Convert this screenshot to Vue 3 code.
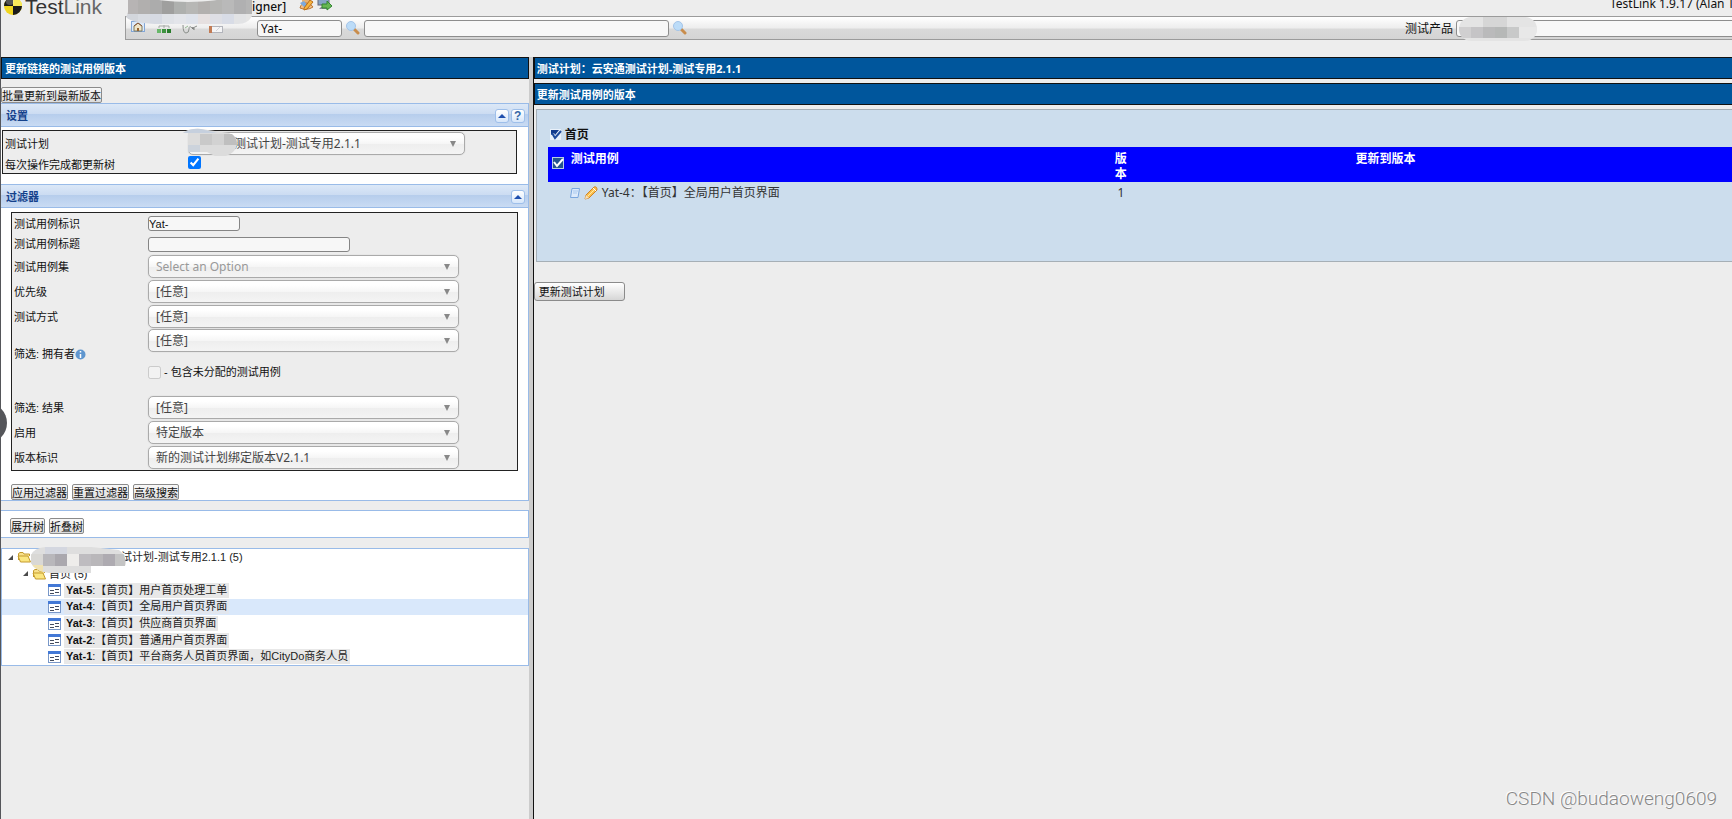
<script setup>
import { ref } from 'vue'

const headerQuery = ref('Yat-')
const headerText = ref('')
const refreshTree = ref(true)
const includeUnassigned = ref(false)
const caseId = ref('Yat-')
const caseTitle = ref('')

const anyFilters = [
  { id: 'suite', label: '测试用例集', value: 'Select an Option', placeholder: true },
  { id: 'priority', label: '优先级', value: '[任意]' },
  { id: 'exec', label: '测试方式', value: '[任意]' }
]
const resultFilters = [
  { id: 'result', label: '筛选: 结果', value: '[任意]' },
  { id: 'enabled', label: '启用', value: '特定版本' },
  { id: 'build', label: '版本标识', value: '新的测试计划绑定版本V2.1.1' }
]
const cases = [
  { id: 'Yat-5', title: '【首页】用户首页处理工单' },
  { id: 'Yat-4', title: '【首页】全局用户首页界面', active: true },
  { id: 'Yat-3', title: '【首页】供应商首页界面' },
  { id: 'Yat-2', title: '【首页】普通用户首页界面' },
  { id: 'Yat-1', title: '【首页】平台商务人员首页界面，如CityDo商务人员' }
]
const roleTiles = ['#b7b4b4', '#b1afae', '#acacac', '#9f9f9e', '#aeb0ae', '#b7b7b5', '#b3b0ae', '#b5b5b3', '#b9b9b9', '#b0b0b1', '#b5b5b5']
const roleTilesLow = ['#d3d6dc', '#d9dce2', '#d6dae3', '#dfe2e7', '#e3e5ea', '#dfe3eb', '#e6e0e0', '#dedfe5', '#d8dce6', '#e2e3e5', '#e5e5e5']
const productTiles = ['#d0cfd0', '#c5c4c6', '#bababb', '#b6b8b7', '#c8c9c9', '#e8e8e8', '#e8e8e8']
const treeTiles = ['#d9d8d5', '#b8b7bb', '#aaa8ae', '#eeedeb', '#bebcc0', '#b9b7ba', '#aeabb1', '#c4c4c4']
</script>

<template>
  <div class="page">
    <header class="top">
      <div class="logo">
        <svg width="23" height="18" viewBox="0 0 23 18" aria-hidden="true">
          <circle cx="12" cy="6" r="9" fill="#f0d51f" />
          <path d="M12 6V-3A9 9 0 0 0 3 6Z M12 6V15A9 9 0 0 0 21 6Z" fill="#1b1b1b" />
          <path d="M12 6V-3A9 9 0 0 1 21 6Z" fill="#f8e95a" />
          <ellipse cx="9" cy="2" rx="4" ry="3" fill="#fff" opacity=".25" />
        </svg>
        <span>Test<i>Link</i></span>
      </div>
      <div class="top-main">
        <div class="user-line">
          <b>igner]</b>
          <svg width="16" height="13" viewBox="0 0 16 13" aria-hidden="true">
            <circle cx="7" cy="1" r="4" fill="#e6b172" />
            <path d="M1 8Q2 3 7 3T14 7Q8 11 1 8Z" fill="#f1be87" stroke="#bd7632" />
            <path d="M1 3 5 1 10 7 7 9Z" fill="#7ca9dc" />
            <path d="M5 8 11 0 14 2 8 9 5 10Z" fill="#f6b33d" stroke="#b86c19" />
          </svg>
          <svg width="16" height="13" viewBox="0 0 16 13" aria-hidden="true">
            <rect x="1" y="-3" width="11" height="8" fill="#86a4c6" stroke="#667" />
            <path d="M4 7H10V9H2Z" fill="#889" />
            <path d="M5 4H10V1L15 6 10 10V8H5Z" fill="#66b753" stroke="#328632" />
          </svg>
          <span class="version">TestLink 1.9.17 (Alan Turing)</span>
        </div>
        <div class="toolbar">
          <nav class="tools">
            <a href="#home" aria-label="Home">
              <svg width="16" height="16" viewBox="0 0 16 16">
                <rect x="1.500" y="1.500" width="13" height="10" fill="#dce9f8" stroke="#82a6d6" />
                <path d="M4 6V11H12V6L8 3Z" fill="#eee4c8" stroke="#7f7a60" />
                <path d="M4 6 8 3 12 6" fill="none" stroke="#8b5634" />
                <path d="M7 8H9V11H7Z" fill="#98642f" />
              </svg>
            </a>
            <a href="#spec" aria-label="Specification">
              <svg width="16" height="16" viewBox="0 0 16 16">
                <path d="M3 8V6H13V8M8 5V8" fill="none" stroke="#a5aaa5" />
                <path d="M1 9H5V13H1Z" fill="#67b768" /><path d="M6 9H10V13H6Z" fill="#3e9340" /><path d="M11 9H15V13H11Z" fill="#287c2b" />
              </svg>
            </a>
            <a href="#run" aria-label="Execute">
              <svg width="16" height="16" viewBox="0 0 16 16">
                <path d="M1 5Q1 13 4 13T7 9 10 8 12 9 15 6" fill="none" stroke="#8b908b" />
                <path d="M3 8 6 6" stroke="#95bb93" /><circle cx="11" cy="8" r="1" fill="#777" />
              </svg>
            </a>
            <a href="#report" aria-label="Reports">
              <svg width="16" height="16" viewBox="0 0 16 16">
                <rect x="2.500" y="6.500" width="12" height="6" fill="#f4f4f5" stroke="#b2b4bb" />
                <path d="M1 6H4V13H1Z" fill="#c27b54" /><path d="M8 11 12 7" stroke="#d4d4d8" />
              </svg>
            </a>
          </nav>
          <input v-model="headerQuery" class="search-id" type="text" aria-label="用例标识">
          <button class="glass" aria-label="查找">
            <svg width="14" height="14" viewBox="0 0 14 14"><path d="M8 8 12 12" stroke="#c98d4c" stroke-width="3" stroke-linecap="round" /><circle cx="5" cy="5" r="4.500" fill="#bcdcf8" stroke="#a4c4e8" /></svg>
          </button>
          <input v-model="headerText" class="search-text" type="text" aria-label="全文搜索">
          <button class="glass" aria-label="搜索">
            <svg width="14" height="14" viewBox="0 0 14 14"><path d="M8 8 12 12" stroke="#c98d4c" stroke-width="3" stroke-linecap="round" /><circle cx="5" cy="5" r="4.500" fill="#bcdcf8" stroke="#a4c4e8" /></svg>
          </button>
          <label class="product-label" for="product">测试产品</label>
          <div class="product-wrap">
            <select id="product" class="product"><option></option></select>
            <svg class="mask product-mask" width="78" height="25" viewBox="0 0 78 25" aria-hidden="true">
              <clipPath id="cp1"><rect width="78" height="24" rx="12" /></clipPath>
              <g clip-path="url(#cp1)">
                <rect width="78" height="25" fill="#e4e4e4" />
                <rect x="24" width="24" height="10" fill="#d6d6d6" />
                <rect v-for="(c, i) in productTiles" :key="i" :x="i * 12" y="10" width="12" height="11" :fill="c" />
              </g>
            </svg>
          </div>
        </div>
        <svg class="mask role-mask" width="126" height="25" viewBox="0 0 126 25" aria-hidden="true">
          <clipPath id="cp2"><path d="M2 0H126V16Q122 24 112 24H36Q6 24 0 17Q2 14 2 12Z" /></clipPath>
          <g clip-path="url(#cp2)">
            <rect v-for="(c, i) in roleTiles" :key="'a' + i" :x="i * 12" y="0" width="12" height="14" :fill="c" />
            <rect v-for="(c, i) in roleTilesLow" :key="'b' + i" :x="i * 12" y="14" width="12" height="11" :fill="c" />
            <ellipse cx="62" cy="-3" rx="36" ry="5" fill="#ededed" />
          </g>
        </svg>
      </div>
    </header>

    <div class="frames">
      <aside class="left">
        <h1 class="title">更新链接的测试用例版本</h1>
        <button class="btn bulk">批量更新到最新版本</button>

        <section>
          <div class="panel-head">
            <h2>设置</h2>
            <button class="tool" aria-label="收起设置"><svg width="8" height="4" viewBox="0 0 8 4"><path d="M0 4 4 0 8 4Z" fill="#1f4fae" /></svg></button>
            <button class="tool" aria-label="帮助">?</button>
          </div>
          <div class="panel-body settings-body">
            <div class="box settings">
              <div class="row plan-row">
                <label for="plan">测试计划</label>
                <span class="drop"><select id="plan"><option>测试计划-测试专用2.1.1</option></select></span>
                <svg class="mask plan-mask" width="56" height="29" viewBox="0 0 56 29" aria-hidden="true">
                  <path d="M0 5Q6 0 18 1L46 5Q56 9 54 17T43 28H32L24 24H5V5Z" fill="#dcdcdc" />
                  <path d="M0 5Q8 0 18 1L34 5Z" fill="#c6d0de" />
                  <path d="M17 6H29V17H17Z" fill="#c9c9c9" /><path d="M29 6H41V17H29Z" fill="#d2d2d2" />
                  <path d="M41 6H49Q54 10 54 17H41Z" fill="#bfbfbf" /><path d="M5 17H17V24H5Z" fill="#ccd3dc" />
                </svg>
              </div>
              <div class="row refresh-row">
                <label for="refresh">每次操作完成都更新树</label>
                <input id="refresh" v-model="refreshTree" type="checkbox">
              </div>
            </div>
          </div>
        </section>

        <section>
          <div class="panel-head">
            <h2>过滤器</h2>
            <button class="tool" aria-label="收起过滤器"><svg width="8" height="4" viewBox="0 0 8 4"><path d="M0 4 4 0 8 4Z" fill="#1f4fae" /></svg></button>
          </div>
          <div class="panel-body filter-body">
            <div class="box filters">
              <div class="row id-row"><label for="caseid">测试用例标识</label><input id="caseid" v-model="caseId" class="short" type="text"></div>
              <div class="row title-row"><label for="casetitle">测试用例标题</label><input id="casetitle" v-model="caseTitle" class="medium" type="text"></div>
              <div v-for="f in anyFilters" :key="f.id" class="row">
                <label :for="f.id">{{ f.label }}</label>
                <span class="drop"><select :id="f.id" :class="{ muted: f.placeholder }"><option>{{ f.value }}</option></select></span>
              </div>
              <div class="row owner">
                <label for="owner">筛选: 拥有者<svg width="11" height="11" viewBox="0 0 11 11" aria-hidden="true"><circle cx="5.500" cy="5.500" r="5" fill="#5f96cf" /><path d="M5.500 2V3.500M5.500 5V9" stroke="#fff" stroke-width="1.500" /></svg></label>
                <div class="owner-controls">
                  <span class="drop"><select id="owner"><option>[任意]</option></select></span>
                  <div class="unassigned"><input id="unassigned" v-model="includeUnassigned" type="checkbox" disabled><label for="unassigned">- 包含未分配的测试用例</label></div>
                </div>
              </div>
              <div v-for="f in resultFilters" :key="f.id" class="row">
                <label :for="f.id">{{ f.label }}</label>
                <span class="drop"><select :id="f.id"><option>{{ f.value }}</option></select></span>
              </div>
            </div>
            <div class="actions">
              <button class="btn">应用过滤器</button>
              <button class="btn">重置过滤器</button>
              <button class="btn">高级搜索</button>
            </div>
          </div>
        </section>

        <div class="tree-actions">
          <button class="btn">展开树</button>
          <button class="btn">折叠树</button>
        </div>

        <div class="tree">
          <div v-for="n in 2" :key="n" class="node" :class="n === 1 ? 'root' : 'suite'">
            <svg width="7" height="7" viewBox="0 0 7 7" aria-hidden="true"><path d="M6 1V6H1Z" fill="#4a4a4a" /></svg>
            <svg class="folder" width="14" height="12" viewBox="0 0 14 12" aria-hidden="true">
              <path d="M1.500 9V2.500L3 1.500H6L7 3H12.500V5" fill="#f8e08a" stroke="#c49a2c" />
              <path d="M1 5H11L13.500 11H3.500Z" fill="#fbe680" stroke="#c49a2c" />
            </svg>
            <span>{{ n === 1 ? '试计划-测试专用2.1.1 (5)' : '首页 (5)' }}</span>
          </div>
          <div v-for="c in cases" :key="c.id" class="node leaf" :class="{ active: c.active }">
            <svg width="13" height="12" viewBox="0 0 13 12" aria-hidden="true">
              <rect x=".5" y=".5" width="12" height="11" fill="#fff" stroke="#7897c8" />
              <path d="M0 0H13V3H0Z" fill="#4379d6" />
              <path d="M2 6.500H6M7 5.500H11M2 9.500H6M7 8.500H11" stroke="#444d60" />
            </svg>
            <a href="#case"><b>{{ c.id }}</b>:{{ c.title }}</a>
          </div>
          <svg class="mask tree-mask" width="95" height="26" viewBox="0 0 95 26" aria-hidden="true">
            <clipPath id="cp3"><path d="M0 8Q3 1 14 0H60L88 3Q96 9 94 19H60V26H18Q4 24 0 16Z" /></clipPath>
            <g clip-path="url(#cp3)">
              <rect width="95" height="26" fill="#dedede" />
              <rect x="14" width="22" height="7" fill="#d4d7e0" />
              <rect v-for="(c, i) in treeTiles" :key="i" :x="i * 12" y="7" width="12" height="12" :fill="c" />
              <rect y="18" width="12" height="8" fill="#f0e2b1" />
            </g>
          </svg>
        </div>
      </aside>

      <main class="right">
        <h1 class="title">测试计划：云安通测试计划-测试专用2.1.1</h1>
        <h2 class="title second">更新测试用例的版本</h2>
        <div class="workarea">
          <h3>
            <svg width="12" height="12" viewBox="0 0 12 12" aria-hidden="true"><rect width="11" height="11" fill="#e9f1fa" /><path d="M1 1H9L5 6 4 4 1 6Z" fill="#123a8c" /><path d="M2 4 5 9 11 2" fill="none" stroke="#1f4b9d" stroke-width="2" /></svg>
            首页
          </h3>
          <table>
            <colgroup><col class="c-check"><col><col class="c-ver"><col class="c-upd"><col class="c-rest"></colgroup>
            <thead>
              <tr>
                <th class="check"><svg width="12" height="12" viewBox="0 0 12 12" role="img" aria-label="全选"><rect x=".5" y=".5" width="11" height="11" fill="#24548f" stroke="#b8cce4" /><path d="M2 5 5 9 11 2" fill="none" stroke="#fff" stroke-width="2" /></svg></th>
                <th class="name">测试用例</th><th class="ver">版本</th><th>更新到版本</th><th></th>
              </tr>
            </thead>
            <tbody>
              <tr>
                <td></td>
                <td class="case">
                  <svg width="10" height="10" viewBox="0 0 10 10" aria-hidden="true"><path d="M2 .5H9.500L8 9.500H.5Z" fill="#dceafb" stroke="#7ba7dd" /><path d="M3 3H8M3 5H7" stroke="#a9c9ee" /></svg>
                  <svg class="pencil" width="14" height="14" viewBox="0 0 14 14" aria-hidden="true"><path d="M1 13 2 9 10 1Q13 0 13 4L5 12Z" fill="#fbbf4b" stroke="#cc832a" /><path d="M1 13 2 9 5 12Z" fill="#f5e1c0" /><path d="M9 2 12 5" stroke="#fff" /><path d="M4 10 10 4" stroke="#ffe9a6" /></svg>
                  <span>Yat-4：【首页】全局用户首页界面</span>
                </td>
                <td class="num">1</td><td></td><td></td>
              </tr>
            </tbody>
          </table>
        </div>
        <button class="update">更新测试计划</button>
      </main>
    </div>

    <div class="side-handle"></div>
    <div class="watermark">CSDN @budaoweng0609</div>
  </div>
</template>

<style>
html, body { margin: 0; background: #ededed; }
</style>

<style scoped>
* { box-sizing: border-box; }
.page {
  position: relative;
  min-height: 100vh;
  display: flex;
  flex-direction: column;
  overflow: hidden;
  background: #ededed;
  border-left: 1px solid #55565a;
  color: #111;
  font: 11px/16px "Liberation Sans", "Noto Sans CJK SC", sans-serif;
}
svg { display: block; flex: none; overflow: hidden; }
h1, h2, h3 { margin: 0; font-size: 11px; }
button, input, select { font: inherit; color: inherit; margin: 0; }
a { color: inherit; text-decoration: none; }
.mask { position: absolute; z-index: 2; pointer-events: none; }

.top { display: flex; height: 57px; flex: none; }
.logo { display: flex; width: 124px; flex: none; gap: 1px; color: #333; font-size: 21px; line-height: 14px; }
.logo i { font-style: normal; color: #666; }
.top-main { position: relative; flex: 1; min-width: 0; }
.user-line { display: flex; height: 16px; padding-left: 127px; gap: 2px; font: 12px/14px "Noto Sans", "Noto Sans CJK SC", sans-serif; }
.user-line b { width: 45px; font-weight: 500; }
.version { margin-left: auto; width: 122px; white-space: nowrap; line-height: 7px; }
.toolbar {
  display: flex;
  align-items: center;
  height: 24px;
  border: 1px solid #9b9b9b;
  border-right: 0;
  background: linear-gradient(#fff, #ededed 50%, #d9d9d9 55%, #d4d4d4);
  font: 12px/16px "Noto Sans", "Noto Sans CJK SC", sans-serif;
}
.tools { display: flex; gap: 10px; width: 131px; padding-left: 4px; flex: none; }
.toolbar input, .product { height: 17px; padding: 0 3px; border: 1px solid #8d8d8d; border-radius: 3px; background: #f7f7f7; }
.search-id { width: 85px; }
.search-text { width: 305px; }
.glass { width: 22px; height: 16px; padding: 0 4px; border: 0; background: none; }
.product-label { margin-left: auto; margin-right: 3px; padding-top: 2px; white-space: nowrap; }
.product-wrap { position: relative; width: 276px; height: 17px; flex: none; }
.product { display: block; width: 300px; appearance: none; }
.product-mask { left: 3px; top: -3px; }
.role-mask { left: 1px; top: 0; }

.frames { display: flex; flex: 1; }
.left { width: 30.7vw; flex: none; border-right: 4px solid #ccc; }
.title {
  height: 22px;
  padding-left: 3px;
  border: 1px solid #111;
  background: #00569c;
  color: #fff;
  font: bold 11px/22px "Noto Sans", "Noto Sans CJK SC", sans-serif;
}
.btn {
  height: 16px;
  padding: 1px 0 0;
  border: 1px solid #8b8b8b;
  border-radius: 2px;
  background: linear-gradient(#f8f8f8, #dcdcdc);
  line-height: 14px;
  white-space: nowrap;
}
.bulk { display: block; margin-top: 8px; }
.panel-head {
  display: flex;
  align-items: center;
  gap: 2px;
  height: 24px;
  padding: 1px 3px 0 5px;
  border: 1px solid #99bbe8;
  border-left: 0;
  background: linear-gradient(#dce8f7, #ccdcf2 44%, #b6cdec 46%, #c9dbf3);
}
.panel-head h2 { flex: 1; color: #15428b; }
.tool {
  display: flex;
  align-items: center;
  justify-content: center;
  width: 14px;
  height: 14px;
  padding: 0;
  border: 1px solid #9ebfea;
  border-radius: 3px;
  background: linear-gradient(#fff, #d6e6fa);
  color: #3767a8;
  font-weight: bold;
  font-size: 12px;
  line-height: 12px;
}
.panel-body { background: #fff; border-right: 1px solid #99bbe8; }
.settings-body { padding: 3px 11px 10px 1px; }
.filter-body { padding: 4px 10px 0; border-bottom: 1px solid #99bbe8; }
.box { border: 1px solid #222; background: #ededed; }
.row { display: flex; align-items: center; height: 25px; padding-left: 2px; }
.row > label { display: flex; align-items: center; flex: none; white-space: nowrap; }
.settings .row > label { width: 183px; }
.filters .row > label { width: 134px; }
.plan-row { position: relative; }
.settings .drop { width: 277px; }
.settings .drop select { padding-left: 45px; }
.plan-mask { left: 180px; top: -3px; }
.row.refresh-row { height: 17px; }
.row.id-row { height: 21px; }
.row.title-row { height: 20px; }
input[type="checkbox"] { width: 13px; height: 13px; flex: none; }
.refresh-row input { align-self: flex-start; }
.row input[type="text"] { height: 15px; padding: 0; border: 1px solid #858585; border-radius: 3px; background: #f7f7f7; line-height: 13px; }
.short { width: 92px; }
.medium { width: 202px; }
.drop { position: relative; display: block; width: 311px; height: 23px; flex: none; }
.drop select {
  display: block;
  width: 100%;
  height: 23px;
  padding: 0 24px 0 7px;
  appearance: none;
  border: 1px solid #aaa;
  border-radius: 5px;
  background: linear-gradient(#fff 20%, #f6f6f6 50%, #eee 52%, #f4f4f4);
  box-shadow: 0 0 1px #bbb;
  color: #444;
  font: 12px/20px "Noto Sans", "Noto Sans CJK SC", sans-serif;
}
.drop select.muted { color: #999; }
.drop::after {
  content: "";
  position: absolute;
  right: 9px;
  top: 9px;
  border: 3px solid transparent;
  border-top: 6px solid #888;
  border-bottom: 0;
  pointer-events: none;
}
.row.owner { height: 66px; padding-bottom: 16px; }
.owner-controls { height: 50px; }
.unassigned { display: flex; align-items: center; gap: 3px; padding-top: 12px; white-space: nowrap; }
.actions { display: flex; gap: 4px; padding-top: 13px; }
.tree-actions {
  display: flex;
  gap: 4px;
  height: 28px;
  margin-top: 9px;
  padding: 7px 9px 0;
  border: 1px solid #99bbe8;
  border-left: 0;
  background: #fff;
}
.tree {
  position: relative;
  display: grid;
  grid-auto-rows: 1fr;
  min-height: 118px;
  margin-top: 10px;
  border: 1px solid #99bbe8;
  background: #fff;
}
.node { display: flex; align-items: center; white-space: nowrap; color: #222; }
.root { padding-left: 5px; }
.suite { padding-left: 20px; }
.folder { margin-left: 3px; }
.node span { margin-left: 3px; }
.root span { margin-left: 90px; }
.leaf { padding-left: 46px; }
.leaf a { margin-left: 3px; padding: 0 2px; background: #e8e8e8; line-height: 15px; }
.leaf.active { background: #d9e8fb; }
.leaf.active a { background: #e1e6ee; }
.leaf b { color: #111; }
.tree-mask { left: 29px; top: -2px; }

.right { flex: 1; min-width: 0; border-left: 1px solid #111; }
.right .title { padding-left: 2px; border-right: 0; }
.right .second { margin-top: 4px; }
.workarea {
  height: 153px;
  margin: 4px 0 0 2px;
  padding: 16px 0 0 11px;
  border: 1px solid #a6afb6;
  border-right: 0;
  background: #ccdded;
}
.workarea h3 { display: flex; align-items: center; gap: 3px; height: 21px; padding: 0 0 3px 2px; font-size: 12px; line-height: 16px; }
table { width: 100%; table-layout: fixed; border-collapse: collapse; font: 12px/16px "Noto Sans", "Noto Sans CJK SC", sans-serif; }
.c-check { width: 20px; }
.c-ver { width: 34px; }
.c-upd { width: 42%; }
.c-rest { width: 8%; }
th, td { padding: 0; vertical-align: top; }
th { height: 35px; padding-top: 4px; background: #00f; color: #fff; }
th.check { padding: 10px 0 0 4px; }
th.name { padding-left: 3px; text-align: left; }
th.ver { padding-left: 8px; padding-right: 12px; word-break: break-all; line-height: 15px; }
th:nth-child(4) { padding-right: 6px; }
td { padding-top: 3px; color: #333; }
.case { display: flex; align-items: center; gap: 4px; padding-left: 2px; white-space: nowrap; }
.num { padding-right: 4px; text-align: center; }
.update {
  display: block;
  width: 91px;
  height: 19px;
  margin-top: 20px;
  padding: 1px 0 0 4px;
  border: 1px solid #8b8b8b;
  border-radius: 3px;
  background: linear-gradient(#fff, #d6d6d6);
  text-align: left;
  line-height: 17px;
}

.side-handle { position: absolute; left: -34px; top: 403px; width: 40px; height: 40px; border-radius: 50%; background: #55565a; }
.watermark {
  position: absolute;
  right: 15px;
  bottom: 8px;
  color: #888;
  font: 300 19px/24px Roboto, "Liberation Sans", sans-serif;
  text-shadow: -1px -1px 0 #fff;
}
</style>
